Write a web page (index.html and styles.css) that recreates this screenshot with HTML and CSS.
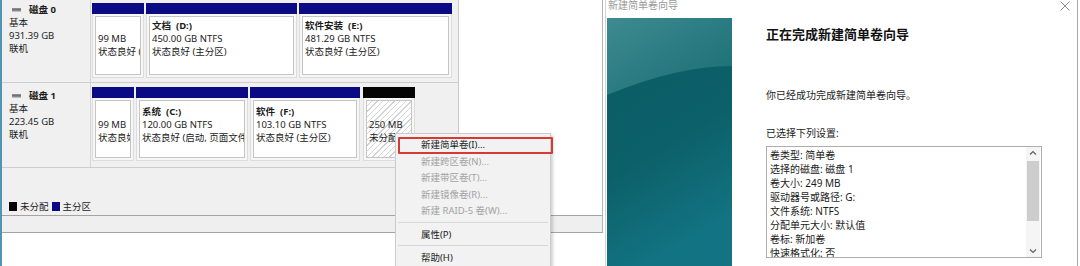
FILE: index.html
```html
<!DOCTYPE html>
<html lang="zh-CN">
<head>
<meta charset="utf-8">
<title>新建简单卷向导</title>
<link rel="stylesheet" href="styles.css">
</head>
<body>
<div class="screen">
  <div class="dm">
    <div class="dm-top">
      <div class="graph">
        <div class="disk disk0">
          <div class="label">
            <div class="disk-name"><svg class="disk-ico" width="9" height="4" viewBox="0 0 9 4"><rect x="0" y="0.5" width="9" height="3" fill="#8a8a8a"/><rect x="0" y="0.5" width="9" height="1" fill="#5a5a5a"/></svg><b>磁盘 0</b></div>
            <div>基本</div>
            <div>931.39 GB</div>
            <div>联机</div>
          </div>
          <div class="parts">
            <div class="part w52"><div class="hdr"></div><div class="body"><div class="box"><div>&nbsp;</div><div>99 MB</div><div>状态良好 (</div></div></div></div>
            <div class="part w150"><div class="hdr"></div><div class="body"><div class="box"><div><b>文档 &nbsp;(D:)</b></div><div>450.00 GB NTFS</div><div>状态良好 (主分区)</div></div></div></div>
            <div class="part w153"><div class="hdr"></div><div class="body"><div class="box"><div><b>软件安装 &nbsp;(E:)</b></div><div>481.29 GB NTFS</div><div>状态良好 (主分区)</div></div></div></div>
          </div>
        </div>
        <div class="disk disk1">
          <div class="label">
            <div class="disk-name"><svg class="disk-ico" width="9" height="4" viewBox="0 0 9 4"><rect x="0" y="0.5" width="9" height="3" fill="#8a8a8a"/><rect x="0" y="0.5" width="9" height="1" fill="#5a5a5a"/></svg><b>磁盘 1</b></div>
            <div>基本</div>
            <div>223.45 GB</div>
            <div>联机</div>
          </div>
          <div class="parts">
            <div class="part w42"><div class="hdr"></div><div class="body"><div class="box"><div>&nbsp;</div><div>99 MB</div><div>状态良好</div></div></div></div>
            <div class="part w111"><div class="hdr"></div><div class="body"><div class="box"><div><b>系统 &nbsp;(C:)</b></div><div>120.00 GB NTFS</div><div>状态良好 (启动, 页面文件</div></div></div></div>
            <div class="part w109"><div class="hdr"></div><div class="body"><div class="box"><div><b>软件 &nbsp;(F:)</b></div><div>103.10 GB NTFS</div><div>状态良好 (主分区)</div></div></div></div>
            <div class="part w51 unalloc"><div class="hdr"></div><div class="body"><div class="box"><div>&nbsp;</div><div>250 MB</div><div>未分配</div></div></div></div>
          </div>
        </div>
        <div class="legend">
          <span class="sw sw-black"></span><span>未分配</span>
          <span class="sw sw-blue"></span><span>主分区</span>
        </div>
      </div>
      <div class="graph-rest"></div>
    </div>
    <div class="strip"></div>
    <div class="dm-bottom"></div>
  </div>

  <div class="wiz">
    <div class="titlebar">
      <span class="title">新建简单卷向导</span>
      <svg class="close" width="10" height="10" viewBox="0 0 10 10"><path d="M0.5 0.5 L9.5 9.5 M9.5 0.5 L0.5 9.5" stroke="#8a8a8a" stroke-width="1" fill="none"/></svg>
    </div>
    <div class="wiz-body">
      <div class="side">
        <svg width="125" height="248" viewBox="0 0 125 248">
          <defs>
            <linearGradient id="gBase" x1="0" y1="0" x2="0.3" y2="1">
              <stop offset="0" stop-color="#0b5b63"/>
              <stop offset="0.6" stop-color="#0c6069"/>
              <stop offset="1" stop-color="#127382"/>
            </linearGradient>
            <linearGradient id="gTop" x1="0" y1="0" x2="1" y2="1">
              <stop offset="0" stop-color="#3e8b90"/>
              <stop offset="0.5" stop-color="#2a7c82"/>
              <stop offset="1" stop-color="#1b6d75"/>
            </linearGradient>
          </defs>
          <rect width="125" height="248" fill="url(#gBase)"/>
          <path d="M0 0 H125 V48 Q70 48 0 77 Z" fill="url(#gTop)"/>
        </svg>
      </div>
      <div class="content">
        <h1 class="heading">正在完成新建简单卷向导</h1>
        <p class="txt t1">你已经成功完成新建简单卷向导。</p>
        <p class="txt t2">已选择下列设置:</p>
        <div class="listbox">
          <div class="items">
            <div>卷类型: 简单卷</div>
            <div>选择的磁盘: 磁盘 1</div>
            <div>卷大小: 249 MB</div>
            <div>驱动器号或路径: G:</div>
            <div>文件系统: NTFS</div>
            <div>分配单元大小: 默认值</div>
            <div>卷标: 新加卷</div>
            <div>快速格式化: 否</div>
          </div>
          <div class="sb">
            <svg class="arr" width="14" height="12" viewBox="0 0 14 12"><path d="M4 7.5 L7 4.5 L10 7.5" stroke="#606060" stroke-width="1.2" fill="none"/></svg>
            <div class="thumb-track"><div class="thumb"></div></div>
            <svg class="arr" width="14" height="12" viewBox="0 0 14 12"><path d="M4 4.5 L7 7.5 L10 4.5" stroke="#606060" stroke-width="1.2" fill="none"/></svg>
          </div>
        </div>
      </div>
    </div>
  </div>

  <div class="menu">
    <div class="mi annot">新建简单卷(I)...</div>
    <div class="mi dis">新建跨区卷(N)...</div>
    <div class="mi dis">新建带区卷(T)...</div>
    <div class="mi dis">新建镜像卷(R)...</div>
    <div class="mi dis">新建 RAID-5 卷(W)...</div>
    <div class="msep"></div>
    <div class="mi">属性(P)</div>
    <div class="msep"></div>
    <div class="mi">帮助(H)</div>
  </div>
</div>
</body>
</html>
```

FILE: styles.css
```css
* { box-sizing: border-box; }
html, body { margin: 0; padding: 0; }
body {
  width: 1080px;
  height: 266px;
  overflow: hidden;
  background: #ffffff;
  font-family: "Noto Sans", "Noto Sans CJK SC", sans-serif;
  color: #1c1c1c;
}
.screen {
  position: relative;
  display: flex;
  width: 1080px;
  height: 266px;
}

/* ---------- disk management pane ---------- */
.dm {
  width: 603px;
  flex: none;
  display: flex;
  flex-direction: column;
  border-left: 2px solid #4f95b3;
}
.dm-top {
  height: 216px;
  display: flex;
  border-right: 1px solid #b4b4b4;
  border-bottom: 1px solid #a4a4a4;
}
.graph {
  width: 457px;
  flex: none;
  background: #f0f0f0;
  border-right: 1px solid #c9c9c9;
  display: flex;
  flex-direction: column;
  font-size: 9.5px;
  line-height: 13px;
}
.graph-rest { flex: 1; background: #ffffff; }
.disk {
  display: flex;
  border-bottom: 1px solid #cdcdcd;
}
.disk0 { height: 83px; }
.disk1 { height: 85px; }
.label {
  width: 89px;
  flex: none;
  padding-left: 7px;
  border-right: 1px solid #d6d6d6;
}
.disk0 .label { padding-top: 3px; }
.disk1 .label { padding-top: 6px; }
.disk-name { display: flex; align-items: center; gap: 8px; padding-left: 3px; }
.disk-ico { flex: none; }
.parts {
  flex: 1;
  display: flex;
  gap: 2px;
  padding-left: 1px;
}
.disk0 .parts { padding-top: 3px; padding-bottom: 4px; }
.disk1 .parts { padding-top: 4px; padding-bottom: 6px; }
.part {
  flex: none;
  display: flex;
  flex-direction: column;
}
.w52 { width: 52px; }
.w150 { width: 151px; }
.w153 { width: 153px; }
.w42 { width: 42px; }
.w111 { width: 112px; }
.w109 { width: 110px; }
.w51 { width: 52px; margin-left: 1px; }
.hdr {
  height: 11px;
  background: #0a0a84;
}
.unalloc .hdr { background: #050505; }
.body {
  flex: 1;
  padding: 2px;
  background: #f7f7f7;
  border: 1px solid #dcdcdc;
  border-top: none;
}
.box {
  height: 100%;
  background: #ffffff;
  border: 1px solid #c4c4c4;
  padding: 2px 0 0 2px;
  overflow: hidden;
  white-space: nowrap;
}
.disk1 .box { padding-top: 4px; }
.unalloc .box {
  background: repeating-linear-gradient(135deg, #ffffff 0 3px, #d2d2d2 3px 4px);
}
.box b { font-weight: 700; }
.legend {
  margin-top: auto;
  display: flex;
  align-items: center;
  padding: 0 0 1px 7px;
  height: 16px;
}
.sw { width: 8px; height: 9px; margin-right: 3px; }
.sw-black { background: #050505; }
.sw-blue { background: #0a0a84; margin-left: 3px; }
.strip {
  height: 17px;
  background: #efefef;
  border-right: 1px solid #b4b4b4;
  border-bottom: 1px solid #a4a4a4;
}
.dm-bottom { flex: 1; background: #ffffff; }

/* ---------- context menu ---------- */
.menu {
  position: absolute;
  left: 395px;
  top: 133px;
  width: 156px;
  height: 140px;
  padding-top: 3px;
  background: #f2f2f2;
  border: 1px solid #cccccc;
  box-shadow: 2px 2px 3px rgba(0, 0, 0, 0.18);
  font-size: 9.5px;
}
.mi {
  position: relative;
  height: 16.5px;
  line-height: 16.5px;
  padding-left: 25px;
  color: #1c1c1c;
  white-space: nowrap;
}
.mi.dis { color: #a2a2a2; }
.annot::after {
  content: "";
  position: absolute;
  left: 2px;
  right: -3px;
  top: 0;
  bottom: 0;
  border: 2px solid #d63a33;
  border-radius: 1px;
}
.msep {
  height: 7px;
  padding-top: 2px;
  margin: 0 2px;
}
.msep::before {
  content: "";
  display: block;
  height: 1px;
  background: #d7d7d7;
}

/* ---------- wizard dialog ---------- */
.wiz {
  flex: 1;
  margin-left: 2px;
  margin-right: 2px;
  border-left: 1px solid #d4d4d4;
  border-right: 1px solid #a9a9a9;
  padding-left: 1px;
  display: flex;
  flex-direction: column;
  background: #ffffff;
}
.titlebar {
  height: 18px;
  flex: none;
  display: flex;
  align-items: flex-start;
  justify-content: space-between;
  padding: 0 7px 0 1px;
}
.title {
  font-size: 10px;
  line-height: 11px;
  color: #9a9a9a;
}
.close { margin-top: 1px; }
.wiz-body {
  flex: 1;
  display: flex;
}
.side {
  width: 125px;
  flex: none;
  line-height: 0;
}
.content {
  flex: 1;
  padding: 8px 0 0 34px;
}
.heading {
  margin: 0;
  font-size: 13px;
  line-height: 16px;
  font-weight: 700;
  color: #111111;
}
.txt {
  margin: 0;
  font-size: 10px;
  line-height: 14px;
  color: #1c1c1c;
}
.t1 { margin-top: 46px; }
.t2 { margin-top: 24px; }
.listbox {
  margin-top: 6px;
  width: 276px;
  height: 112px;
  border: 1px solid #adadad;
  display: flex;
  overflow: hidden;
}
.items {
  flex: 1;
  padding: 1px 0 0 3px;
  font-size: 10px;
  line-height: 14px;
  white-space: nowrap;
  overflow: hidden;
}
.sb {
  width: 14px;
  flex: none;
  margin-right: 1px;
  display: flex;
  flex-direction: column;
  background: #f5f5f5;
}
.arr { flex: none; display: block; }
.thumb-track { flex: 1; padding: 2px 1px; }
.thumb { height: 60px; background: #cdcdcd; }
```
